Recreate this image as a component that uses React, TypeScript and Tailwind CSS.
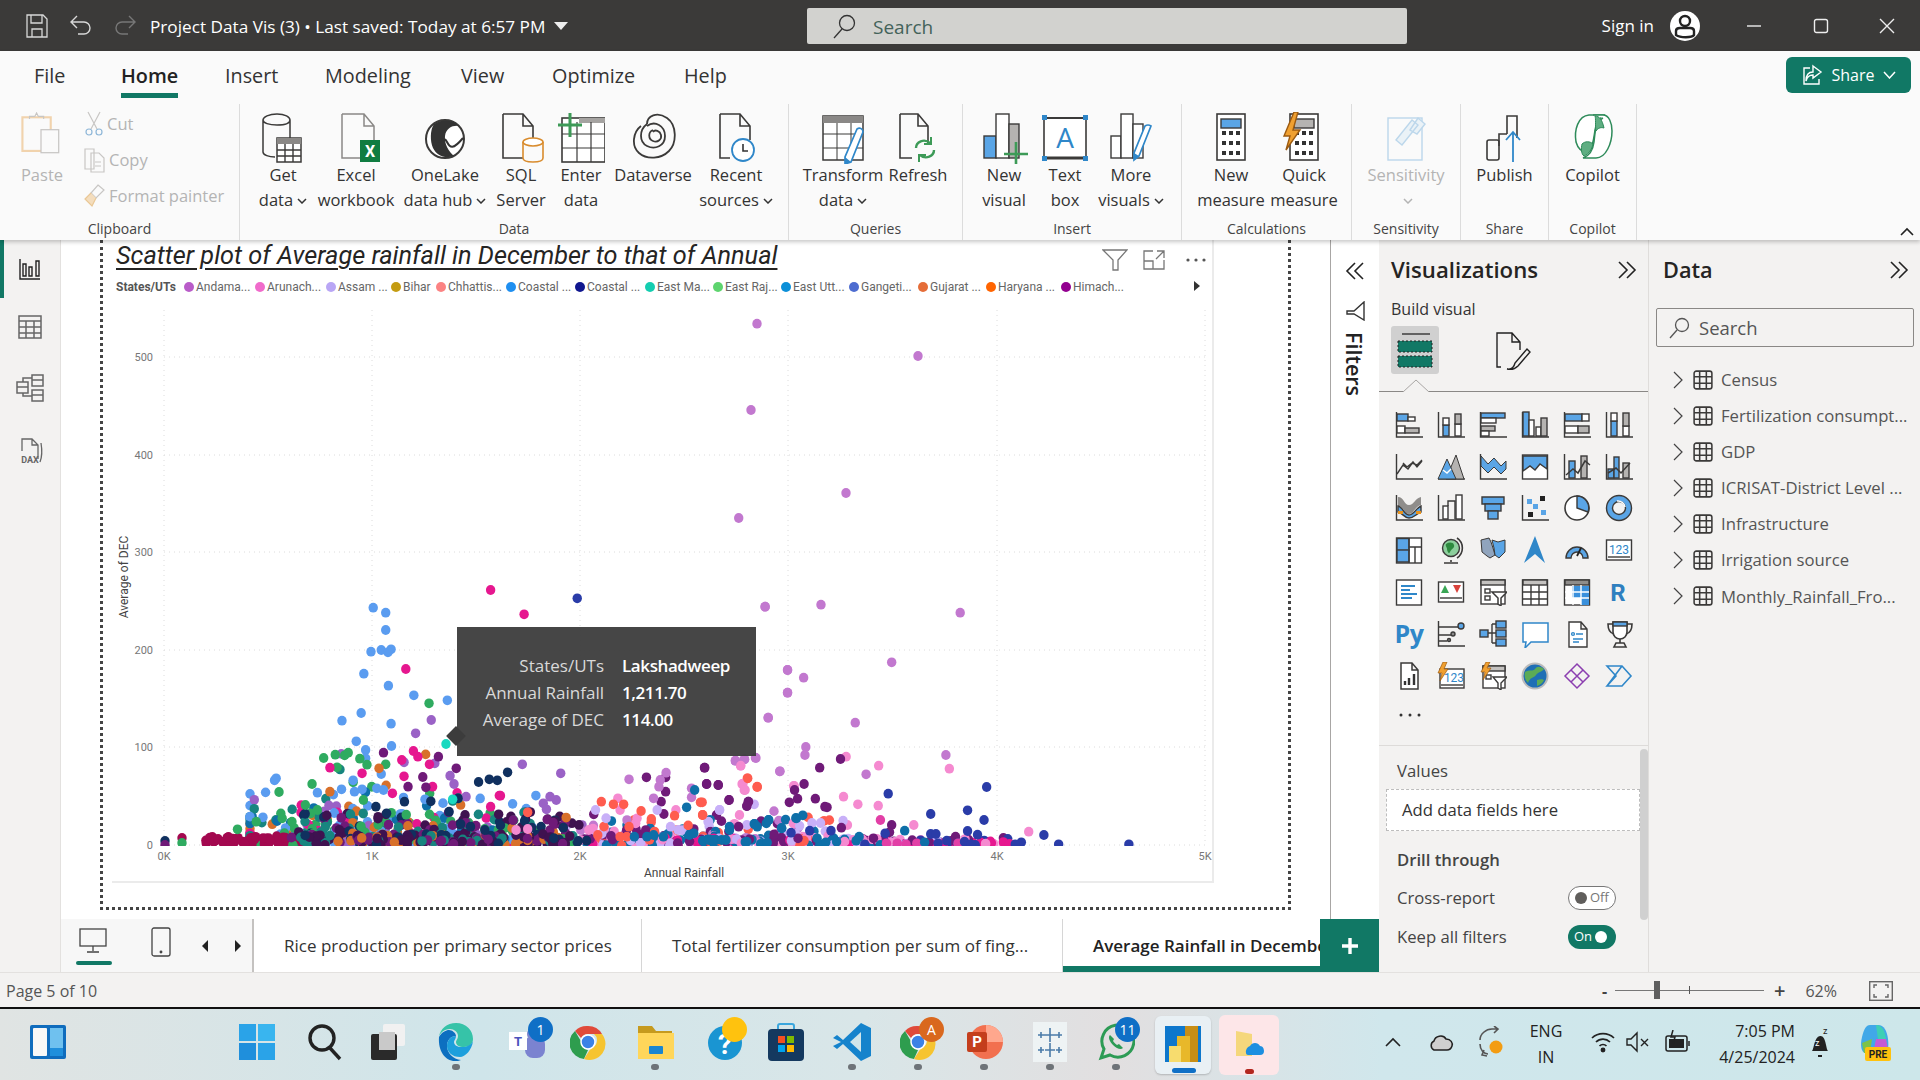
import type { ReactNode } from "react";

const UI = "font-['Open_Sans',sans-serif]";
const DIN = "font-['Roboto',sans-serif]";
const O = "#3b3a39";
const B = "#5aa5e6";
const G = "#b5b3b1";

// seeded random so the scatter stays the same on every render
function rng(seed: number) {
  return () => {
    seed |= 0;
    seed = (seed + 0x6d2b79f5) | 0;
    let t = Math.imul(seed ^ (seed >>> 15), 1 | seed);
    t = (t + Math.imul(t ^ (t >>> 7), 61 | t)) ^ t;
    return ((t ^ (t >>> 14)) >>> 0) / 4294967296;
  };
}

type Dot = [number, number, string];
const c = {
  sky: "#5a9cf0", hot: "#e6178f", green: "#2fab60", violet: "#9a62c6", plum: "#6f1a78", navy: "#10305f",
  teal: "#17857f", orange: "#d8702a", maroon: "#a3084f", fade: "#c278cf", pink: "#f58ad0", red: "#ff5c4f",
  lilac: "#c8b0f8", bluet: "#0e6fa8", indigo: "#2a3ca8", dark: "#3f1250", gold: "#b8921a",
};

function z8(list: number[][], col: string): Dot[] {
  return list.map(([x, y]) => [100 + x / 2.24, 600 + y / 3, col]);
}
function z10(list: number[][], col: string): Dot[] {
  return list.map(([x, y]) => [700 + x / 2.306, 600 + y / 3, col]);
}

function buildDots(): Dot[] {
  const r = rng(42);
  const out: Dot[] = [];
  const pick = (a: string[]) => a[Math.floor(r() * a.length)];
  // upper scatter of the first cluster, light colours underneath
  for (let i = 0; i < 300; i++) {
    const x = 375 + (r() + r() + r() - 1.5) * 170;
    out.push([Math.max(250, x), 845 - -Math.log(r() + 0.001) * 17, pick([c.sky, c.sky, c.green, c.orange, c.hot, c.violet, c.bluet, c.teal])]);
  }
  for (let i = 0; i < 190; i++) {
    const x = 700 + (r() - 0.5) * 270;
    out.push([x, 845 - -Math.log(r() + 0.001) * 8, pick([c.lilac, c.pink, c.fade, c.red, c.plum, c.bluet])]);
  }
  for (let i = 0; i < 90; i++) {
    out.push([830 + r() * 180, 845 - r() * r() * 10, pick([c.pink, c.hot, c.lilac, c.indigo, c.plum])]);
  }
  // baseline band
  for (let i = 0; i < 60; i++) out.push([205 + r() * 120, 836 + r() * 9, c.maroon]);
  for (let i = 0; i < 170; i++) out.push([290 + r() * 290, 812 + r() * 33, pick([c.dark, c.dark, c.plum, c.orange, c.teal, c.green, c.navy])]);
  for (let i = 0; i < 170; i++) out.push([300 + r() * 280, 834 + r() * 11, pick([c.dark, c.dark, c.dark, c.teal, c.orange, c.navy, c.plum])]);
  for (let i = 0; i < 110; i++) out.push([585 + r() * 300, 838 + r() * 8, pick([c.hot, c.pink, c.plum, c.bluet, c.lilac, c.red])]);
  out.push([165, 841, c.navy], [165, 845, c.plum], [182, 838, c.maroon], [182, 843, c.green]);
  return out;
}

const FIXED: Dot[] = [
  ...z8([[612,23],[640,38],[640,90],[607,155],[630,150],[652,148],[645,157],[591,221],[646,257],[703,286],[778,301],[585,339],[542,362],[652,371],[574,424],[653,438],[595,450],[595,475],[391,541],[567,541],[630,522],[587,568],[541,568],[487,578],[570,575],[620,565],[635,570],[365,652]], c.sky),
  ...z8([[737,310],[501,474],[527,464],[548,466],[556,458],[582,476],[598,494],[640,493],[531,502],[475,552],[401,576],[590,600],[460,615],[487,630],[408,655],[430,665],[350,665],[308,688]], c.green),
  ...z8([[742,360],[707,400],[750,490],[946,493],[1032,520],[793,552],[820,590],[993,610],[1022,600],[1000,628],[1008,590]], c.violet),
  ...z8([[950,43],[685,207],[676,480],[702,453],[712,470],[738,493],[681,529],[587,520],[745,560],[897,587],[875,620],[515,503],[655,580],[875,-30]], c.hot),
  ...z8([[635,458],[758,470],[723,531],[690,560],[730,562],[1224,532],[1267,532],[1354,503],[1359,552],[1385,555],[1267,575],[1257,605],[1263,642],[1409,600],[1452,605],[1449,618],[1106,643],[1015,668],[798,505],[1145,708]], c.plum),
  ...z8([[913,517],[848,546],[872,538],[890,541],[802,595],[782,635],[741,604],[682,605],[618,620],[642,640],[951,663],[1038,683],[1090,722],[808,672],[830,680],[862,690],[897,676]], c.navy),
  ...z8([[1540,210],[1540,278],[1497,353],[1490,20],[1523,514],[1185,538],[1255,540],[1252,560],[1468,473],[1443,478],[1423,482],[1325,565],[1325,592],[1240,595],[1268,518]], c.fade),
  ...z8([[1435,497],[1440,552],[1445,570],[1555,558],[1160,595],[1290,630],[1203,655],[1200,670],[1095,690],[1165,630],[932,690],[958,687]], c.pink),
  ...z8([[1450,535],[1472,560],[1345,607],[1123,605],[1150,613],[1173,613],[1212,633],[1235,657],[1287,647],[1350,645],[958,637],[1185,680],[1115,705],[1165,710],[1180,710]], c.red),
  ...z8([[1388,630],[1110,630],[1248,630],[1362,665],[1278,680],[1295,690]], c.lilac),
  ...z8([[1332,570],[1314,622],[1498,660],[1560,655],[1466,672],[1527,685],[1410,680],[1320,705],[1330,700],[1240,705],[1225,710],[1262,710],[1197,710],[1365,720],[1350,722],[1380,720]], c.bluet),
  ...z8([[775,432],[790,598]], "#1ad9c0"),
  ...z8([[1069,-5]], c.indigo),
  ...z8([[625,505],[515,575]], c.orange),
  [757, 323.7, c.fade], [751, 410, c.fade], [738.7, 518, c.fade], [918, 356, c.fade], [846, 493, c.fade],
  ...z10([[150,20],[279,14],[600,38],[442,187],[202,210],[239,233],[202,278],[157,353],[358,368],[244,441],[242,465],[567,465],[129,474],[103,478],[82,482],[184,514],[383,523]], c.fade),
  ...z10([[337,470],[412,497],[575,506],[94,497],[97,552],[102,570],[216,558],[331,590],[364,613],[411,617],[91,645],[493,675],[758,695],[340,675]], c.pink),
  ...z10([[416,660],[430,730],[455,730],[500,730],[595,730],[475,733]], "#e23fa6"),
  ...z10([[125,613],[45,630],[278,669],[258,669],[20,666],[108,675],[330,662]], c.lilac),
  ...z10([[110,535],[132,561],[5,607],[6,645],[240,722]], c.red),
  ...z10([[11,503],[324,477],[276,503],[15,552],[42,555],[240,552],[218,570],[225,596],[206,607],[266,596],[288,620],[293,622],[67,600],[112,605],[108,618],[442,675],[437,697],[326,683],[89,680],[400,715],[171,703],[226,715]], c.plum),
  ...z10([[237,646],[221,654],[158,660],[125,672],[132,680],[188,684],[472,692],[367,710],[360,722],[270,715],[518,727],[108,725],[68,690],[50,720],[20,718],[30,720],[60,720],[155,728],[290,727],[315,725]], c.bluet),
  ...z10([[661,561],[434,581],[532,642],[617,631],[655,660],[302,692],[253,692],[210,698],[617,693],[640,704],[793,705],[532,702],[544,702],[427,700],[827,733],[989,733],[741,727],[727,733],[569,722],[610,725],[625,733],[549,730],[380,733]], c.indigo),
];

const DOTS = [...buildDots(), ...FIXED];
const XT = [164, 372, 580, 788, 997, 1205];
const YT: [number, string][] = [[845, "0"], [747, "100"], [650, "200"], [552, "300"], [455, "400"], [357, "500"]];

function Scatter() {
  return (
    <svg viewBox="112 300 1102 583" className="block w-[1102px] h-[583px]">
      <defs>
        <clipPath id="plot"><rect x="112" y="300" width="1102" height="546" /></clipPath>
      </defs>
      {XT.map((x) => <line key={x} x1={x} x2={x} y1="310" y2="845" stroke="#dcdcdc" strokeDasharray="1 4" />)}
      {YT.map(([y, t]) => (
        <g key={t}>
          <line x1="164" x2="1205" y1={y} y2={y} stroke="#dcdcdc" strokeDasharray="1 4" />
          <text x="153" y={y + 4} textAnchor="end" fontSize="11" fill="#777" fontFamily="Roboto">{t}</text>
        </g>
      ))}
      {XT.map((x, i) => <text key={x} x={x} y="860" textAnchor="middle" fontSize="11" fill="#777" fontFamily="Roboto">{i}K</text>)}
      <g clipPath="url(#plot)">
        {DOTS.map((d, i) => <ellipse key={i} cx={d[0]} cy={d[1]} rx="4.7" ry="4.9" fill={d[2]} />)}
      </g>
      <text x="684" y="877" textAnchor="middle" fontSize="12" fill="#444" fontFamily="Roboto">Annual Rainfall</text>
      <text transform="translate(128 577) rotate(-90)" textAnchor="middle" fontSize="12" fill="#444" fontFamily="Roboto">Average of DEC</text>
    </svg>
  );
}

const LEGEND: [string, string, string][] = [
  ["Andama...", "#b95cc9", "w-[71px]"], ["Arunach...", "#f06bcb", "w-[71px]"], ["Assam ...", "#b9a6f5", "w-[65px]"], ["Bihar", "#c49c12", "w-[45px]"],
  ["Chhattis...", "#fb8383", "w-[70px]"], ["Coastal ...", "#1f8ff0", "w-[69px]"], ["Coastal ...", "#11178f", "w-[70px]"], ["East Ma...", "#14cdb0", "w-[68px]"],
  ["East Raj...", "#5ed46e", "w-[68px]"], ["East Utt...", "#0c8fd8", "w-[68px]"], ["Gangeti...", "#4d6cd0", "w-[69px]"], ["Gujarat ...", "#e56d38", "w-[68px]"],
  ["Haryana ...", "#ff6400", "w-[75px]"], ["Himach...", "#930090", "w-[70px]"],
];

function Ic({ w = 28, h = 28, vb, children, className }: { w?: number; h?: number; vb?: string; children: ReactNode; className?: string }) {
  return (
    <svg width={w} height={h} viewBox={vb ?? `0 0 ${w} ${h}`} fill="none" stroke={O} strokeWidth="1.4" className={`shrink-0 ${className ?? ""}`}>
      {children}
    </svg>
  );
}

const Ax = () => <path d="M1.5 1v25h27" stroke={O} strokeWidth="1.4" />;

function TableGlyph({ s = O, size = 20 }: { s?: string; size?: number }) {
  return (
    <svg width={size} height={size} viewBox="0 0 18 18" fill="none" stroke={s} strokeWidth="1.4" className="shrink-0">
      <rect x="1" y="1" width="16" height="16" rx="2" />
      <path d="M1 6h16M1 12h16M6 1v16M12 1v16" />
    </svg>
  );
}

const Pt = ({ d, f = B }: { d: string; f?: string }) => <path d={d} fill={f} stroke={O} strokeWidth="1" />;

const VIZ: ReactNode[] = [
  <><Ax /><rect x="2" y="3" width="11" height="7" fill={B} stroke={O} /><rect x="13" y="6" width="7" height="4" fill="#fff" stroke={O} /><rect x="2" y="15" width="8" height="7" fill="#fff" stroke={O} /><rect x="10" y="17" width="14" height="5" fill={G} stroke={O} /></>,
  <><Ax /><rect x="6" y="14" width="6" height="11" fill={B} stroke={O} /><rect x="6" y="7" width="6" height="7" fill="#fff" stroke={O} /><rect x="18" y="13" width="6" height="12" fill="#fff" stroke={O} /><rect x="18" y="3" width="6" height="10" fill={G} stroke={O} /></>,
  <><Ax /><rect x="2" y="2" width="24" height="5" fill={B} stroke={O} /><rect x="2" y="7" width="15" height="5" fill="#fff" stroke={O} /><rect x="2" y="15" width="14" height="5" fill={G} stroke={O} /><rect x="2" y="20" width="8" height="5" fill="#fff" stroke={O} /></>,
  <><Ax /><rect x="2" y="1" width="6" height="24" fill={B} stroke={O} /><rect x="8" y="9" width="5" height="16" fill="#fff" stroke={O} /><rect x="15" y="16" width="5" height="9" fill="#fff" stroke={O} /><rect x="20" y="7" width="6" height="18" fill={G} stroke={O} /></>,
  <><Ax /><rect x="2" y="3" width="17" height="7" fill={B} stroke={O} /><rect x="19" y="3" width="7" height="7" fill="#fff" stroke={O} /><rect x="2" y="15" width="13" height="7" fill="#fff" stroke={O} /><rect x="15" y="15" width="11" height="7" fill={G} stroke={O} /></>,
  <><Ax /><rect x="6" y="10" width="6" height="15" fill={B} stroke={O} /><rect x="6" y="2" width="6" height="8" fill="#fff" stroke={O} /><rect x="18" y="15" width="6" height="10" fill="#fff" stroke={O} /><rect x="18" y="2" width="6" height="13" fill={G} stroke={O} /></>,

  <><Ax /><path d="M2 21 8 12l5 4 5-7 4 5 5-6M8 10l4 4 5-4 5 2 5-5" /></>,
  <><path d="M1 26h27" /><Pt d="M9 26 19 2l8 24z" f={G} /><Pt d="M1 26 10 6l9 20z" /><path d="M6 17l4 3 4-4" stroke="#fff" strokeWidth="1.4" /></>,
  <><Ax /><Pt d="M2 3l7 8 6-6 7 8 5-5v8L22 21l-7-7-6 6-7-7z" /></>,
  <><rect x="1.5" y="2" width="25" height="24" fill="#fff" stroke={O} /><path d="M2 3h24v13l-7-5-5 6-5-4-7 5z" fill={B} /></>,
  <><Ax /><rect x="6" y="8" width="6" height="17" fill={B} stroke={O} /><rect x="18" y="3" width="6" height="22" fill={G} stroke={O} /><path d="M3 22l7-6 5 4 7-12 5 4" strokeWidth="1.5" /></>,
  <><Ax /><rect x="3" y="16" width="6" height="9" fill={B} stroke={O} /><rect x="9" y="4" width="5" height="21" fill={B} stroke={O} /><rect x="18" y="10" width="6" height="15" fill={G} stroke={O} /><path d="M3 20l8-5 5 5 9-10" strokeWidth="1.5" /></>,

  <><Ax /><path d="M3 3c6 0 6 8 11 8s6-7 12-8v8c-6 1-7 9-12 9S9 12 3 12z" fill="#8f8d8b" stroke="none" /><path d="M3 12c5 1 6 9 11 9s7-7 12-9v6c-5 2-7 6-12 6S8 19 3 18z" fill={B} stroke={O} /><rect x="3" y="17" width="5" height="3" fill="#e8931e" stroke="none" /><rect x="21" y="17" width="5" height="3" fill="#e8931e" stroke="none" /></>,
  <><Ax /><rect x="6" y="12" width="5" height="13" fill="#fff" stroke={O} /><path d="M11 12V7h7v18" /><rect x="19" y="1" width="6" height="24" fill="#fff" stroke={O} /></>,
  <><path d="M3 3h22v7H3z" fill={B} stroke={O} /><rect x="6" y="10" width="16" height="7" fill={B} stroke={O} /><rect x="9" y="17" width="10" height="8" fill={B} stroke={O} /></>,
  <><Ax /><rect x="19" y="2" width="5" height="5" fill="#222" stroke="none" /><rect x="6" y="5" width="5" height="5" fill={B} stroke="none" /><rect x="12" y="10" width="5" height="5" fill={B} stroke="none" /><rect x="7" y="18" width="5" height="5" fill="#222" stroke="none" /><rect x="20" y="16" width="5" height="5" fill={B} stroke="none" /></>,
  <><circle cx="14" cy="14" r="12" fill="#fff" strokeWidth="1.6" /><path d="M14 14V2a12 12 0 0 1 11 16z" fill={B} /></>,
  <><circle cx="14" cy="14" r="9.500" fill="none" stroke={B} strokeWidth="5.500" /><circle cx="14" cy="14" r="12.500" /><circle cx="14" cy="14" r="6.500" /><path d="M12 7a7 7 0 0 1 8 6" stroke="#fff" strokeWidth="1.500" /></>,

  <><rect x="1.5" y="2" width="25" height="25" fill="#fff" stroke={O} /><rect x="2" y="2.5" width="12" height="12" fill={B} /><rect x="2" y="14" width="12" height="12" fill={B} stroke={O} /><path d="M14 2v25M14 11h12M20 11v16" /></>,
  <><circle cx="14" cy="12" r="8.5" fill="#8ccf9c" /><path d="M9 8c3-2 7-2 8 1s-3 4-4 7-3-1-3-3-2-3-1-5z" fill="#2d8a3e" stroke="none" /><path d="M20 2a12 12 0 0 1 0 20M14 24v2M7 27h14" strokeWidth="1.6" /></>,
  <><Pt d="M2 4l8-2 2 4 2 6 2 7-5 3-3-2-5-4z" f="#90a4bd" /><Pt d="M13 4l6 2 7-2v12l-6 6-4-3-1-7z" f={B} /></>,
  <path d="M14 0 3 27l11-9 10 9z" fill="#2f87c9" stroke="none" />,
  <><path d="M3 22a11 11 0 0 1 22 0h-5a6 6 0 0 0-12 0z" fill={B} /><path d="M14 20l4-8" stroke="#222" strokeWidth="1.8" /></>,
  <><rect x="1.5" y="4" width="25" height="20" fill="#fff" /><path d="M3 21h22" /><text x="14" y="18" textAnchor="middle" fontSize="12" stroke="none" fill="#2f87c9" fontFamily="Roboto">123</text></>,

  <><rect x="1.5" y="2" width="25" height="25" fill="#fff" /><path d="M6 8h14M6 12h9M6 16h16M6 20h11" stroke="#2f87c9" strokeWidth="2" /></>,
  <><rect x="1.5" y="4" width="25" height="20" fill="#fff" /><path d="M8 7l4 8H4z" fill="#3aa655" stroke="none" /><path d="M16 7h8l-4 8z" fill="#d9423b" stroke="none" /><path d="M3 20h22" /></>,
  <><rect x="2" y="2" width="24" height="24" fill="#fff" /><rect x="2" y="2" width="24" height="5" fill="#c4c2c0" /><rect x="6" y="11" width="5" height="4" /><rect x="6" y="18" width="5" height="4" /><path d="M13 14h15l-6 6v8l-3-2v-6z" fill="#fff" strokeWidth="1.5" /></>,
  <><rect x="1.5" y="2" width="25" height="25" fill="#fff" /><rect x="2" y="2" width="24" height="5" fill="#c4c2c0" /><path d="M2 14h24M2 21h24M10 7v20M18 7v20" /></>,
  <><rect x="1.5" y="2" width="25" height="25" fill="#fff" /><rect x="2" y="2" width="24" height="5" fill="#8f8d8b" /><rect x="9" y="8" width="17" height="12" fill="#3a90dc" stroke="none" /><rect x="18" y="20" width="8" height="7" fill="#3a90dc" stroke="none" /><path d="M2 14h24M2 20h24M10 7v20M18 7v20" stroke="#fff" /></>,
  <text x="13" y="23" textAnchor="middle" fontSize="24" fontWeight="700" stroke="none" fill="#2f7fbf" fontFamily="Roboto">R</text>,

  null,
  <><Ax /><path d="M2 7h20M2 15h12M2 21h8" /><circle cx="24" cy="6" r="3" fill={B} /><circle cx="16" cy="14" r="2" fill="#888" /><circle cx="12" cy="20" r="1.5" fill="#888" /></>,
  <><rect x="1" y="10" width="8" height="7" fill={B} /><rect x="17" y="1" width="10" height="7" fill={B} /><rect x="17" y="10" width="10" height="7" fill={B} /><rect x="17" y="19" width="10" height="7" fill={B} /><path d="M9 13h8M13 4h4M13 23h4M13 4v19" /></>,
  <path d="M2 3h25v19H10l-6 6 1-6H2z" fill="#fff" stroke="#2f87c9" strokeWidth="1.5" />,
  <><path d="M6 2h12l6 7v18H6zM18 2v7h6" fill="#fff" stroke={O} /><circle cx="10" cy="14" r="1.4" stroke="#2f87c9" /><path d="M13 14h7M10 19h10M10 22h6" stroke="#2f87c9" /></>,
  <><path d="M8 2h14v10a7 7 0 0 1-14 0z" fill="#fff" strokeWidth="1.6" /><rect x="8" y="2" width="14" height="4" fill={B} /><path d="M8 4H3c0 6 2 9 6 10M22 4h5c0 6-2 9-6 10M15 19v4M9 27h12l-2-4h-8z" strokeWidth="1.6" /></>,

  <><path d="M6 1h11l6 7v19H6zM17 1v7h6" fill="#fff" strokeWidth="1.5" /><path d="M10 23v-4M14 23v-7M19 23V12" stroke="#333" strokeWidth="2.4" /></>,
  <><rect x="3" y="7" width="24" height="19" fill="#fff" /><path d="M4 23h22" /><text x="17" y="20" textAnchor="middle" fontSize="12" stroke="none" fill="#2f87c9" fontFamily="Roboto">123</text><path d="M6 0 1 11h4l-2 8 8-12H7l3-7z" fill="#f0a030" stroke="#9c5a10" strokeWidth=".7" /></>,
  <><rect x="4" y="4" width="22" height="22" fill="#fff" /><rect x="4" y="4" width="22" height="5" fill="#c4c2c0" /><rect x="7" y="13" width="5" height="4" /><path d="M14 15h14l-6 6v7l-3-2v-5z" fill="#fff" /><path d="M7 0 2 10h4l-2 8 8-12H8l3-6z" fill="#f0a030" stroke="#9c5a10" strokeWidth=".7" /></>,
  <><circle cx="14" cy="14" r="12.5" fill="#1f6fb5" stroke="#bbb" strokeWidth="2" /><path d="M4 10c4-3 8 0 10-3s5-3 9 0c-2 3-6 3-8 6s-6 2-8 8c-3-3-4-7-3-11zM16 18c3-1 6-1 7 0-1 3-4 5-7 6z" fill="#5cab56" stroke="none" /></>,
  <><path d="M14 2 26 14 14 26 2 14z" stroke="#8b3fb0" strokeWidth="1.5" /><path d="M8 8l12 12M20 8 8 20" stroke="#8b3fb0" strokeWidth="1.5" /></>,
  <path d="M2 4h15l9 10-9 10H2l9-10zM2 24l15-20" stroke="#2f87c9" strokeWidth="1.6" />,
];

const VizCell = ({ children }: { children: ReactNode }) => (
  <div className="flex items-center justify-center">
    {children ? <Ic>{children}</Ic> : <span className="text-[25px] font-bold leading-none text-[#2f87c9] tracking-[-0.5px]">Py</span>}
  </div>
);

function RibbonBtn({ width, lines, icon, arrow, muted }: { width: string; lines: string[]; icon: ReactNode; arrow?: boolean; muted?: boolean }) {
  return (
    <div className={`${width} flex flex-col items-center`}>
      <div className="h-[46px] flex items-start justify-center">{icon}</div>
      <div className={`mt-[4px] flex flex-col items-center text-[16.5px] leading-[25px] whitespace-nowrap ${muted ? "text-[#b4b4b4]" : "text-[#333]"}`}>
        {lines.map((l, i) => (
          <span key={i} className="flex items-center min-h-[25px]">
            {l}
            {arrow && i === lines.length - 1 && (
              <svg width="10" height="6" viewBox="0 0 10 6" className="ml-[4px] mt-[3px]" fill="none" stroke="currentColor" strokeWidth="1.5"><path d="M1 1l4 4 4-4" /></svg>
            )}
          </span>
        ))}
      </div>
    </div>
  );
}

function Group({ width, pl, label, children }: { width: string; pl?: string; label: string; children: ReactNode }) {
  return (
    <div className={`${width} h-full shrink-0 flex flex-col border-r border-[#dcdcdc]`}>
      <div className={`h-[110px] flex pt-[8px] ${pl ?? ""}`}>{children}</div>
      <div className="h-[26px] text-center text-[14px] text-[#444] leading-[30px]">{label}</div>
    </div>
  );
}

const I = { w: 48, h: 52 };
const IconGet = () => <Ic {...I}><path d="M4 8v32c0 3 6 5 12 5M4 8c0-3 6-6 14-6s13 3 13 6-5 5-13 5S4 11 4 8zM31 8v19" strokeWidth="1.5" /><rect x="18" y="26" width="24" height="24" fill="#fff" strokeWidth="1.5" /><rect x="18" y="26" width="24" height="6" fill="#8a8886" stroke="none" /><path d="M18 38h24M18 44h24M26 32v18M34 32v18" /></Ic>;
const IconExcel = () => <Ic {...I} vb="0 0 48 52"><path d="M10 2h22l10 12v14M10 2v44h18M32 2v12h10" stroke="#8a8886" strokeWidth="1.5" /><rect x="28" y="28" width="20" height="22" fill="#107c41" stroke="none" /><text x="38" y="45" textAnchor="middle" fontSize="16" fontWeight="700" fill="#fff" stroke="none" fontFamily="Roboto">X</text></Ic>;
const IconLake = () => <Ic {...I}><circle cx="24" cy="27" r="19" fill="#fff" strokeWidth="2" /><path d="M13 12c8-6 20-4 25 2-6-1-13 2-14 10s4 16 9 20c-9 3-17 0-21-8-3-7-3-18 1-24z" fill="#333" stroke="none" /><path d="M14 38c4-10 9-14 12-8s6 8 16-4" stroke="#333" strokeWidth="2" /></Ic>;
const IconSql = () => <Ic {...I}><path d="M6 2h20l10 12v12M6 2v44h20M26 2v12h10" strokeWidth="1.6" /><ellipse cx="36" cy="30" rx="10" ry="4" stroke="#d98c2e" strokeWidth="1.6" fill="#fff" /><path d="M26 30v16c0 3 4 4 10 4s10-1 10-4V30" stroke="#d98c2e" strokeWidth="1.6" /></Ic>;
const IconEnter = () => <Ic {...I}><rect x="5" y="6" width="43" height="44" fill="#fff" stroke={O} strokeWidth="1.6" /><rect x="22" y="6" width="26" height="5" fill="#a5a3a1" stroke="none" /><path d="M5 22h43M5 36h43M20 10v40M34 10v40" strokeWidth="1.2" /><path d="M1 13h24M13 1v24" stroke="#3d9a57" strokeWidth="3" /></Ic>;
const IconVerse = () => <Ic {...I}><path d="M12 14C4 20 2 34 10 41s22 6 30-2 8-26-2-33-20-2-20 6" strokeWidth="1.800" /><path d="M18 12c-8 6-8 18 0 22s18 0 18-10-10-16-18-10M24 18c-5 2-5 9 0 11s9-2 8-6-6-6-8-3" strokeWidth="1.800" /></Ic>;
const IconRecent = () => <Ic {...I}><path d="M8 2h20l10 12v14M8 2v44h10M28 2v12h10" strokeWidth="1.6" /><circle cx="31" cy="38" r="11" fill="#fff" stroke="#2f87c9" strokeWidth="1.8" /><path d="M31 32v7h5" stroke="#333" strokeWidth="1.6" /></Ic>;
const IconTransform = () => <Ic {...I}><rect x="4" y="4" width="40" height="44" fill="#fff" strokeWidth="1.5" /><rect x="4" y="4" width="40" height="7" fill="#8a8886" stroke="none" /><path d="M4 22h40M4 36h40M18 11v37M32 11v37" strokeWidth="1" /><path d="M44 20 32 50l-6 2v-7l12-28c3-2 6 0 6 3z" fill="#fff" stroke="#2f87c9" strokeWidth="1.7" /><path d="M26 52v-7l6 5z" fill="#2f87c9" stroke="none" /></Ic>;
const IconRefresh = () => <Ic {...I}><path d="M6 2h18l10 12v18M6 2v44h12M24 2v12h10" strokeWidth="1.6" /><path d="M22 36c0-6 8-10 14-5M40 38c0 6-8 10-14 5" stroke="#3d9a57" strokeWidth="2.4" /><path d="M37 25v7h-7M25 50v-7h7" stroke="#3d9a57" strokeWidth="2" /></Ic>;
const IconNew = () => <Ic {...I}><rect x="4" y="24" width="12" height="22" fill={B} stroke={O} /><rect x="16" y="2" width="13" height="44" fill="#fff" stroke={O} /><rect x="29" y="12" width="10" height="34" fill="#b5b3b1" stroke={O} /><path d="M36 30v22M24 42h24" stroke="#3d9a57" strokeWidth="2.6" /></Ic>;
const IconText = () => <Ic {...I}><rect x="3" y="6" width="42" height="40" fill="#fff" strokeWidth="1.6" /><path d="M3 46h42" strokeWidth="3" /><path d="M3 6h42" strokeWidth="2" /><rect x="1" y="3" width="5" height="5" fill="#2f87c9" stroke="none" /><rect x="42" y="3" width="5" height="5" fill="#2f87c9" stroke="none" /><rect x="1" y="44" width="5" height="5" fill="#2f87c9" stroke="none" /><rect x="42" y="44" width="5" height="5" fill="#2f87c9" stroke="none" /><text x="24" y="36" textAnchor="middle" fontSize="28" fill="#2f87c9" stroke="none" fontFamily="Open Sans">A</text></Ic>;
const IconMore = () => <Ic {...I}><rect x="4" y="24" width="10" height="22" fill="#fff" /><rect x="14" y="2" width="12" height="44" fill="#fff" /><rect x="26" y="12" width="10" height="34" fill="#fff" /><path d="M44 14 32 44l-5 4v-7l11-27c3-2 6 0 6 0z" fill="#fff" stroke="#2f87c9" strokeWidth="1.7" /><path d="M27 48v-7l5 3z" fill="#2f87c9" stroke="none" /></Ic>;
const Calc = () => <><rect x="10" y="2" width="28" height="46" fill="#fff" strokeWidth="1.6" /><path d="M15 21h4m3 0h4m3 0h4M15 31h4m3 0h4m3 0h4M15 41h4m3 0h4m3 0h4" stroke="#333" strokeWidth="4" /></>;
const IconMeasure = () => <Ic {...I}><Calc /><rect x="14" y="7" width="20" height="9" fill={B} stroke={O} /></Ic>;
const IconQuick = () => <Ic {...I}><Calc /><rect x="14" y="7" width="20" height="9" fill="#b5b3b1" stroke={O} /><path d="M14 0 4 24h6l-4 14 14-20h-7l5-18z" fill="#f0a030" stroke="#9c5a10" /></Ic>;
const IconSens = () => <Ic {...I} className="opacity-50"><rect x="6" y="6" width="34" height="42" stroke="#7fb5de" strokeWidth="1.4" /><path d="M14 28 30 8l6 5-16 20zM28 18l8-12 7 6-8 10z" stroke="#7fb5de" fill="#dcebf6" strokeWidth="1.4" /></Ic>;
const IconPublish = () => <Ic {...I}><rect x="6" y="28" width="12" height="20" rx="2" strokeWidth="1.6" /><path d="M18 34v-12h8M26 22V4h10v22" strokeWidth="1.6" /><path d="M32 50V20M25 28l7-8 7 8" stroke="#2f87c9" strokeWidth="1.8" /></Ic>;
const IconCopilot = () => <Ic {...I}><path d="M7 30C5 18 9 4 20 3h16c-6 2-9 8-10 15s-2 20-8 22c-5 0-9-3-11-10z" fill="#fff" stroke="#2e8b5a" strokeWidth="1.500" /><path d="M24 3h10c6 0 9 8 9 16 0 12-6 27-16 27H14c6-2 10-8 11-16s1-20 9-24" fill="#fff" stroke="#2e8b5a" strokeWidth="1.500" /><path d="M26 4c4 0 7 3 9 12-3-1-6 0-8 3-1-6 0-12-1-15zM13 32c3-3 8-3 11 0-1 5-4 10-9 12-3-2-3-8-2-12z" fill="#5fae82" stroke="#2e8b5a" strokeWidth="1" /></Ic>;

const Dim = "#c8c6c4";

function Ribbon() {
  return (
    <div className={`h-[189px] shrink-0 bg-[#fafafa] shadow-[0_2px_4px_rgba(0,0,0,0.22)] relative z-20 ${UI}`}>
      <div className="h-[53px] flex pl-[34px] text-[19.8px] text-[#333] relative">
        {[["File", "w-[87px]"], ["Home", "w-[104px]"], ["Insert", "w-[100px]"], ["Modeling", "w-[136px]"], ["View", "w-[91px]"], ["Optimize", "w-[132px]"], ["Help", "w-[60px]"]].map(([t, w]) => (
          <div key={t} className={`${w} pt-[10px]`}>
            <span className={`relative inline-block pb-[2px] ${t === "Home" ? "font-semibold border-b-[5px] border-[#117865] text-[#222]" : ""}`}>{t}</span>
          </div>
        ))}
        <div className="absolute right-[9px] top-[6px] w-[125px] h-[36px] rounded-md bg-[#117865] flex items-center justify-center gap-[8px] text-[#fff] text-[16px]">
          <svg width="22" height="22" viewBox="0 0 22 22" fill="none" stroke="#fff" strokeWidth="1.4"><path d="M11 2l8 6-8 6v-3c-3 0-6 2-7 6 0-6 3-9 7-9zM8 4H2v16h15v-5" /></svg>
          Share
          <svg width="13" height="8" viewBox="0 0 13 8" fill="none" stroke="#fff" strokeWidth="1.5"><path d="M1 1l5.5 6L12 1" /></svg>
        </div>
      </div>

      <div className="h-[136px] flex relative">
        {/* Clipboard */}
        <Group width="w-[240px]" label="Clipboard">
          <div className="w-[84px] flex flex-col items-center text-[16.5px] text-[#b4b4b4]">
            <Ic {...I} className="ml-[-2px] h-[46px]"><rect x="3" y="6" width="32" height="38" stroke="#f1d3ad" strokeWidth="2.4" /><path d="M11 8V5h6l2-4 2 4h6v3" stroke={Dim} strokeWidth="1.3" /><rect x="24" y="20" width="20" height="26" fill="#fafafa" stroke={Dim} strokeWidth="1.4" /></Ic>
            <span className="mt-[4px] leading-[25px]">Paste</span>
          </div>
          <div className="flex flex-col text-[16.5px] text-[#b4b4b4] leading-[36px] mt-[-6px]">
            <div className="flex items-center gap-[3px]"><svg width="20" height="26" viewBox="0 0 20 26" fill="none" stroke={Dim} strokeWidth="1.2"><path d="M4 1l9 17M16 1L7 18" /><circle cx="5" cy="21" r="3" stroke="#8fb7d8" /><circle cx="15" cy="21" r="3" stroke="#8fb7d8" /></svg>Cut</div>
            <div className="flex items-center gap-[3px]"><svg width="22" height="26" viewBox="0 0 22 26" fill="none" stroke={Dim} strokeWidth="1.2"><path d="M1 2h9v20H1zM7 6h8l5 5v14H7zM11 15h6M11 19h6" /></svg>Copy</div>
            <div className="flex items-center gap-[3px]"><svg width="22" height="26" viewBox="0 0 22 26" fill="none" stroke={Dim} strokeWidth="1.2"><path d="M14 2l6 5-8 8-5-5z" /><path d="M7 10l-6 6 7 7 4-8" fill="#f4ddbd" stroke="#e9c795" /></svg><span className="whitespace-nowrap">Format painter</span></div>
          </div>
        </Group>

        <Group width="w-[549px]" label="Data" pl="pl-[6px]">
          <RibbonBtn width="w-[74px]" lines={["Get", "data"]} arrow icon={<IconGet />} />
          <RibbonBtn width="w-[72px]" lines={["Excel", "workbook"]} icon={<IconExcel />} />
          <RibbonBtn width="w-[106px]" lines={["OneLake", "data hub"]} arrow icon={<IconLake />} />
          <RibbonBtn width="w-[46px]" lines={["SQL", "Server"]} icon={<IconSql />} />
          <RibbonBtn width="w-[74px]" lines={["Enter", "data"]} icon={<IconEnter />} />
          <RibbonBtn width="w-[70px]" lines={["Dataverse"]} icon={<IconVerse />} />
          <RibbonBtn width="w-[96px]" lines={["Recent", "sources"]} arrow icon={<IconRecent />} />
        </Group>

        <Group width="w-[174px]" label="Queries" pl="pl-[6px]">
          <RibbonBtn width="w-[96px]" lines={["Transform", "data"]} arrow icon={<IconTransform />} />
          <RibbonBtn width="w-[54px]" lines={["Refresh"]} icon={<IconRefresh />} />
        </Group>

        <Group width="w-[219px]" label="Insert">
          <RibbonBtn width="w-[82px]" lines={["New", "visual"]} icon={<IconNew />} />
          <RibbonBtn width="w-[40px]" lines={["Text", "box"]} icon={<IconText />} />
          <RibbonBtn width="w-[92px]" lines={["More", "visuals"]} arrow icon={<IconMore />} />
        </Group>

        <Group width="w-[170px]" label="Calculations" pl="pl-[8px]">
          <RibbonBtn width="w-[82px]" lines={["New", "measure"]} icon={<IconMeasure />} />
          <RibbonBtn width="w-[64px]" lines={["Quick", "measure"]} icon={<IconQuick />} />
        </Group>

        <Group width="w-[109px]" label="Sensitivity">
          <RibbonBtn width="w-[109px]" lines={["Sensitivity", ""]} arrow muted icon={<IconSens />} />
        </Group>

        <Group width="w-[88px]" label="Share">
          <RibbonBtn width="w-[88px]" lines={["Publish"]} icon={<IconPublish />} />
        </Group>

        <Group width="w-[88px]" label="Copilot">
          <RibbonBtn width="w-[88px]" lines={["Copilot"]} icon={<IconCopilot />} />
        </Group>

        <svg width="14" height="9" viewBox="0 0 14 9" className="absolute right-[6px] bottom-[4px]" fill="none" stroke="#222" strokeWidth="1.6"><path d="M1 8l6-6 6 6" /></svg>
      </div>
    </div>
  );
}

function TitleBar() {
  return (
    <div className={`h-[51px] shrink-0 bg-[#3b3a39] flex items-center text-[#fff] relative ${UI}`}>
      <div className="w-[150px] flex items-center pl-[26px] gap-[22px]">
        <svg width="22" height="24" viewBox="0 0 22 24" fill="none" stroke="#d8d8d8" strokeWidth="1.3"><path d="M1 1h16l4 4v18H1zM5 1v8h11V1M6 23v-8h10v8" /></svg>
        <svg width="22" height="24" viewBox="0 0 22 24" fill="none" stroke="#d8d8d8" strokeWidth="1.4"><path d="M2 8h12a6 6 0 0 1 0 12H8M7 2 1 8l6 6" /></svg>
        <svg width="22" height="24" viewBox="0 0 22 24" fill="none" stroke="#777" strokeWidth="1.4"><path d="M20 8H8a6 6 0 0 0 0 12h6M15 2l6 6-6 6" /></svg>
      </div>
      <span className="text-[17.2px] whitespace-nowrap mt-[3px]">Project Data Vis (3) • Last saved: Today at 6:57 PM</span>
      <svg width="14" height="8" viewBox="0 0 14 8" className="ml-[9px]" fill="#eee"><path d="M0 0h14L7 8z" /></svg>
      <div className="absolute left-[807px] top-[8px] w-[600px] h-[36px] bg-[#d2d2cf] rounded-[2px] flex items-center pl-[25px] gap-[15px] text-[#44625a] text-[19px]">
        <svg width="26" height="26" viewBox="0 0 26 26" fill="none" stroke="#333" strokeWidth="1.3"><circle cx="15" cy="10" r="7.5" /><path d="M10 16 2 25" /></svg>
        <span className="mt-[2px]">Search</span>
      </div>
      <div className="ml-auto flex items-center">
        <span className="text-[17px] mr-[16px]">Sign in</span>
        <svg width="30" height="30" viewBox="0 0 30 30" className="mr-[46px]"><circle cx="15" cy="15" r="15" fill="#fff" /><circle cx="15" cy="10" r="5" fill="none" stroke="#222" strokeWidth="2.4" /><path d="M6 24v-4c0-2 2-3 4-3h10c2 0 4 1 4 3v4c-2 3-14 3-18 0z" fill="none" stroke="#222" strokeWidth="2.4" /></svg>
        <svg width="16" height="16" viewBox="0 0 16 16" className="mr-[51px]" stroke="#eee" strokeWidth="1.4"><path d="M1 8h14" /></svg>
        <svg width="16" height="16" viewBox="0 0 16 16" className="mr-[50px]" fill="none" stroke="#eee" strokeWidth="1.4"><rect x="1.5" y="1.5" width="13" height="13" rx="2" /></svg>
        <svg width="16" height="16" viewBox="0 0 16 16" className="mr-[25px]" stroke="#eee" strokeWidth="1.4"><path d="M1 1l14 14M15 1 1 15" /></svg>
      </div>
    </div>
  );
}

function Sidebar() {
  return (
    <div className="w-[61px] shrink-0 bg-[#f3f2f1] border-r border-[#e3e1df] relative flex flex-col items-center pt-[18px] gap-[35px]">
      <div className="absolute left-0 top-0 w-[4px] h-[58px] bg-[#117865]" />
      <svg width="22" height="22" viewBox="0 0 22 22" fill="none" stroke="#222" strokeWidth="1.4"><path d="M1 1v20h20M4 18V6h3v12zM10 18V9h3v9zM17 18V3h3v15z" /></svg>
      <svg width="24" height="24" viewBox="0 0 24 24" fill="none" stroke="#666" strokeWidth="1.5"><rect x="1" y="1" width="22" height="22" /><path d="M1 6h22M1 12h22M1 18h22M8 6v17M16 6v17" /></svg>
      <svg width="28" height="28" viewBox="0 0 28 28" fill="none" stroke="#666" strokeWidth="1.5"><rect x="1" y="8" width="11" height="11" /><rect x="16" y="1" width="11" height="11" /><rect x="16" y="16" width="11" height="11" /><path d="M1 13h11M16 6h11M16 21h11M7 8V4h9M7 19v3h9" /></svg>
      <svg width="28" height="28" viewBox="0 0 28 28" fill="none" stroke="#666" strokeWidth="1.3"><path d="M6 14V2h10l6 6v14M16 2v6h6M25 6c1 6 1 14-1 19" /><text x="14" y="26" textAnchor="middle" fontSize="9" fontWeight="700" fill="#666" stroke="none" fontFamily="Roboto">DAX</text></svg>
    </div>
  );
}

function Canvas() {
  return (
    <div className="flex-1 bg-[#fff] pl-[39px] pr-[39px] overflow-hidden">
      <div className="h-[670px] border-x-[3px] border-b-[3px] border-dotted border-[#444] pl-[9px] pr-[75px]">
        <div className="relative h-[643px] w-[1102px] border-r-2 border-b-2 border-[#ebebeb]">
          {/* title */}
          <div className="h-[32px] flex items-center pl-[4px] relative">
            <span className={`text-[25.3px] italic text-[#252423] underline underline-offset-[4px] whitespace-nowrap ${DIN}`}>Scatter plot of Average rainfall in December to that of Annual</span>
            <div className="absolute left-[990px] top-[9px] flex items-center">
              <svg width="26" height="22" viewBox="0 0 26 22" fill="none" stroke="#777" strokeWidth="1.3"><path d="M1 1h24l-9 10v10h-5V11z" /></svg>
              <svg width="22" height="20" viewBox="0 0 22 20" className="ml-[15px]" fill="none" stroke="#777" strokeWidth="1.3"><path d="M10 1H1v18h20v-9M1 11h9v8M14 1h7v7M21 1l-8 8" /></svg>
              <svg width="22" height="6" viewBox="0 0 22 6" className="ml-[20px]" fill="#555"><circle cx="3" cy="3" r="1.6" /><circle cx="11" cy="3" r="1.6" /><circle cx="19" cy="3" r="1.6" /></svg>
            </div>
          </div>
          {/* legend */}
          <div className={`h-[28px] pt-[2px] flex items-center pl-[4px] text-[12px] text-[#666] relative ${DIN}`}>
            <span className="w-[68px] font-bold text-[#555] whitespace-nowrap">States/UTs</span>
            {LEGEND.map(([t, col, w], i) => (
              <div key={i} className={`${w} flex items-center gap-[2px] whitespace-nowrap`}>
                <span className="w-[10px] h-[10px] rounded-full shrink-0" style={{ backgroundColor: col }} />
                {t}
              </div>
            ))}
            <svg width="6" height="10" viewBox="0 0 6 10" className="absolute left-[1082px] top-[9px]" fill="#333"><path d="M0 0l6 5-6 5z" /></svg>
          </div>
          <Scatter />
          {/* tooltip over the chart */}
          <div className={`absolute left-[345px] top-[387px] w-[299px] h-[129px] bg-[#3c3c3c]/95 text-[17px] text-[#d9d9d9] ${UI}`}>
            <div className="absolute left-[-8px] top-[102px] w-[14px] h-[14px] rotate-45 bg-[#3c3c3c]" />
            <div className="grid grid-cols-[147px_1fr] gap-x-[18px] pt-[25px] leading-[27px]">
              <span className="text-right">States/UTs</span><span className="font-semibold text-[#fff] tracking-[-0.4px]">Lakshadweep</span>
              <span className="text-right">Annual Rainfall</span><span className="font-semibold text-[#fff] tracking-[-0.4px]">1,211.70</span>
              <span className="text-right whitespace-nowrap">Average of DEC</span><span className="font-semibold text-[#fff] tracking-[-0.4px]">114.00</span>
            </div>
          </div>
        </div>
      </div>
    </div>
  );
}

function Filters() {
  return (
    <div className={`w-[49px] shrink-0 bg-[#fff] border-l border-[#a8a6a4] flex flex-col items-center pt-[21px] ${UI}`}>
      <svg width="20" height="20" viewBox="0 0 20 20" fill="none" stroke="#222" strokeWidth="1.6"><path d="M10 2 2 10l8 8M18 2l-8 8 8 8" /></svg>
      <svg width="20" height="20" viewBox="0 0 20 20" className="mt-[20px]" fill="none" stroke="#333" strokeWidth="1.4"><path d="M19 1v18L9 13H2v-3h7z" /></svg>
      <span className="mt-[11px] ml-[-3px] text-[21.5px] font-semibold text-[#222] [writing-mode:vertical-rl]">Filters</span>
    </div>
  );
}

function Tabs() {
  return (
    <div className={`h-[53px] shrink-0 flex bg-[#fff] text-[17px] text-[#333] ${UI}`}>
      <div className="w-[193px] shrink-0 bg-[#f7f7f7] border-r-2 border-[#c4c2c0] flex items-center relative pl-[18px]">
        <svg width="28" height="26" viewBox="0 0 28 26" className="mb-[10px]" fill="none" stroke="#444" strokeWidth="1.3"><rect x="1" y="1" width="26" height="17" /><path d="M14 18v5M8 24h12" /></svg>
        <svg width="20" height="30" viewBox="0 0 20 30" className="ml-[44px] mb-[8px]" fill="none" stroke="#444" strokeWidth="1.3"><rect x="1" y="1" width="18" height="28" rx="2" /><circle cx="10" cy="25" r=".8" fill="#444" /></svg>
        <svg width="6" height="12" viewBox="0 0 6 12" className="ml-[31px]" fill="#222"><path d="M6 0v12L0 6z" /></svg>
        <svg width="6" height="12" viewBox="0 0 6 12" className="ml-[27px]" fill="#222"><path d="M0 0v12l6-6z" /></svg>
        <div className="absolute left-[15px] bottom-[7px] w-[36px] h-[4px] rounded-full bg-[#117865]" />
      </div>
      <div className="w-[388px] shrink-0 border-r border-[#d6d6d6] flex items-center pl-[30px] pt-[1px] whitespace-nowrap">Rice production per primary sector prices</div>
      <div className="w-[421px] shrink-0 border-r border-[#d6d6d6] flex items-center pl-[30px] pt-[1px] whitespace-nowrap">Total fertilizer consumption per sum of fing...</div>
      <div className="w-[257px] shrink-0 border-b-[6px] border-[#117865] flex items-center pl-[30px] pt-[6px] whitespace-nowrap overflow-hidden font-semibold text-[#222]">Average Rainfall in December</div>
      <div className="flex-1 bg-[#117865] flex items-center justify-center">
        <svg width="16" height="16" viewBox="0 0 16 16" stroke="#fff" strokeWidth="3.4"><path d="M8 0v16M0 8h16" /></svg>
      </div>
    </div>
  );
}

function VizPane() {
  return (
    <div className={`w-[270px] shrink-0 bg-[#f3f2f1] border-r border-[#dfdddb] flex flex-col relative ${UI}`}>
      <div className="h-[60px] flex items-center justify-between pl-[12px] pr-[11px]">
        <span className="text-[22.2px] font-semibold text-[#252423]">Visualizations</span>
        <svg width="20" height="20" viewBox="0 0 20 20" fill="none" stroke="#222" strokeWidth="1.6"><path d="M2 2l8 8-8 8M10 2l8 8-8 8" /></svg>
      </div>
      <div className="pl-[12px] text-[16px] leading-[18px] text-[#333]">Build visual</div>
      <div className="h-[66px] relative border-b border-[#8a8886] mt-[8px]">
        <div className="absolute left-[12px] top-0 w-[48px] h-[48px] rounded-[3px] bg-[#d0d0d0] flex items-center justify-center">
          <svg width="38" height="36" viewBox="0 0 38 36"><path d="M6 2h28" stroke="#333" strokeWidth="1.4" /><rect x="2" y="9" width="34" height="11" fill="#117865" stroke="#222" strokeDasharray="2 2" /><rect x="2" y="24" width="34" height="11" fill="#117865" stroke="#222" strokeDasharray="2 2" /></svg>
        </div>
        <svg width="38" height="42" viewBox="0 0 38 42" className="absolute left-[116px] top-[5px]" fill="none" stroke="#222" strokeWidth="1.4"><path d="M6 36H2V2h15l8 9v8M17 2v9h8" /><path d="M12 38c5 1 7-2 8-6l12-14 3 3-12 14c-3 3-7 4-11 3z" fill="#f3f2f1" /></svg>
        <svg width="26" height="13" viewBox="0 0 26 13" className="absolute left-[24px] bottom-[-1px]"><path d="M0 13 13 1l13 12" fill="#f3f2f1" stroke="#a8a6a4" strokeWidth="1" /></svg>
      </div>
      <div className="grid grid-cols-[repeat(6,42px)] auto-rows-[41.8px] pl-[9px] pt-[12px]">
        {VIZ.map((v, i) => <VizCell key={i}>{v}</VizCell>)}
      </div>
      <div className="pl-[19px] mt-[15px] h-[24px]">
        <svg width="24" height="6" viewBox="0 0 24 6" fill="#333"><circle cx="3" cy="3" r="1.5" /><circle cx="12" cy="3" r="1.5" /><circle cx="21" cy="3" r="1.5" /></svg>
      </div>
      <div className="absolute left-0 right-0 top-[505px] border-t border-[#dddbd9]" />
      <div className="absolute left-[261px] top-[509px] w-[8px] h-[171px] rounded-full bg-[#d0d0d0]" />
      <div className="absolute left-0 top-[505px] w-full text-[16.7px] text-[#444]">
        <div className="pl-[18px] pt-[16px] leading-[20px]">Values</div>
        <div className="mt-[8px] ml-[7px] w-[254px] h-[42px] bg-[#fff] border border-dashed border-[#bdbdbd] flex items-center pl-[15px] text-[#333]">Add data fields here</div>
        <div className="pl-[18px] mt-[19px] font-semibold leading-[20px]">Drill through</div>
        <div className="pl-[18px] mt-[16px] flex items-center h-[24px] pr-[32px] justify-between">
          Cross-report
          <div className="w-[48px] h-[24px] rounded-full border border-[#777] bg-[#fff] flex items-center pl-[6px] gap-[3px] text-[13px] text-[#777]">
            <span className="w-[12px] h-[12px] rounded-full bg-[#605e5c]" />Off
          </div>
        </div>
        <div className="pl-[18px] mt-[15px] flex items-center h-[24px] pr-[32px] justify-between">
          Keep all filters
          <div className="w-[48px] h-[24px] rounded-full bg-[#117865] flex items-center pl-[6px] gap-[3px] text-[13px] text-[#fff]">
            On<span className="w-[12px] h-[12px] rounded-full bg-[#fff]" />
          </div>
        </div>
      </div>
    </div>
  );
}

const FIELDS = ["Census", "Fertilization consumpt...", "GDP", "ICRISAT-District Level ...", "Infrastructure", "Irrigation source", "Monthly_Rainfall_Fro..."];

function DataPane() {
  return (
    <div className={`flex-1 bg-[#f3f2f1] ${UI}`}>
      <div className="h-[60px] flex items-center justify-between pl-[14px] pr-[11px]">
        <span className="text-[21.7px] font-semibold text-[#252423]">Data</span>
        <svg width="20" height="20" viewBox="0 0 20 20" fill="none" stroke="#222" strokeWidth="1.6"><path d="M2 2l8 8-8 8M10 2l8 8-8 8" /></svg>
      </div>
      <div className="ml-[7px] mt-[8px] w-[258px] h-[39px] border border-[#8a8886] rounded-[2px] flex items-center pl-[12px] gap-[8px] text-[18.5px] text-[#555]">
        <svg width="22" height="22" viewBox="0 0 22 22" fill="none" stroke="#555" strokeWidth="1.3"><circle cx="13" cy="8" r="6.5" /><path d="M8 13 1 21" /></svg>
        <span className="mt-[1px]">Search</span>
      </div>
      <div className="mt-[14.5px] flex flex-col">
        {FIELDS.map((f) => (
          <div key={f} className="h-[36.1px] flex items-center pl-[24px] text-[16.7px] text-[#555] whitespace-nowrap">
            <svg width="10" height="18" viewBox="0 0 10 18" fill="none" stroke="#444" strokeWidth="1.2"><path d="M1 1l8 8-8 8" /></svg>
            <span className="ml-[10px]"><TableGlyph /></span>
            <span className="ml-[8px]">{f}</span>
          </div>
        ))}
      </div>
    </div>
  );
}

function StatusBar() {
  return (
    <div className={`h-[35px] shrink-0 bg-[#f3f2f1] border-t border-[#e3e1df] flex items-center pl-[6px] pt-[1px] text-[16px] text-[#555] relative ${UI}`}>
      Page 5 of 10
      <div className="ml-auto flex items-center pr-[27px]">
        <span className="text-[#444] font-bold mr-[8px]">-</span>
        <div className="w-[149px] h-[1px] bg-[#777] relative mr-[10px]">
          <div className="absolute left-[39px] top-[-9px] w-[6px] h-[18px] bg-[#5f5f5f]" />
          <div className="absolute left-[74px] top-[-4px] w-[1px] h-[8px] bg-[#555]" />
        </div>
        <span className="text-[#444] text-[20px] font-semibold mr-[20px]">+</span>
        <span className="mr-[32px]">62%</span>
        <svg width="24" height="20" viewBox="0 0 24 20" fill="none" stroke="#666" strokeWidth="1.4"><rect x=".7" y=".7" width="22.6" height="18.6" /><path d="M5 7V4h3M16 4h3v3M19 13v3h-3M8 16H5v-3" /></svg>
      </div>
    </div>
  );
}

const Dot1 = ({ col = "#6e7378" }: { col?: string }) => <span className="absolute left-1/2 -translate-x-1/2 top-[55px] w-[8px] h-[6px] rounded-full" style={{ backgroundColor: col }} />;

function Slot({ w, dot, children, badge, className }: { w: string; dot?: boolean; children: ReactNode; badge?: ReactNode; className?: string }) {
  return (
    <div className={`${w} shrink-0 h-full relative flex items-center justify-center pb-[5px] ${className ?? ""}`}>
      {children}
      {badge}
      {dot && <Dot1 />}
    </div>
  );
}

const Badge = ({ t, col = "#0f6fc6", pos }: { t: string; col?: string; pos: string }) => (
  <span className={`absolute ${pos} top-[8px] w-[25px] h-[25px] rounded-full flex items-center justify-center text-[14px] text-[#fff]`} style={{ backgroundColor: col }}>{t}</span>
);

const Chrome = () => (
  <svg width="36" height="36" viewBox="0 0 36 36">
    <path d="M18 2a16 16 0 0 1 14 8H18a8 8 0 0 0-7 4L5 7a16 16 0 0 1 13-5z" fill="#e04a3a" />
    <path d="M5 7l7 12a8 8 0 0 0 6 7l-4 9A16 16 0 0 1 5 7z" fill="#2e9d4e" />
    <path d="M32 10a16 16 0 0 1-18 25l7-11a8 8 0 0 0 3-14z" fill="#f6c430" />
    <circle cx="18" cy="18" r="7" fill="#3b82e6" stroke="#fff" strokeWidth="1.5" />
  </svg>
);

function Taskbar() {
  return (
    <div className={`flex-1 bg-[linear-gradient(90deg,#e0e4e3_0%,#cfe5ea_25%,#d9e6e8_45%,#e2dfe0_58%,#d0e7ec_72%,#cde7ea_100%)] flex items-stretch ${UI}`}>
      <Slot w="w-[96px]">
        <svg width="36" height="34" viewBox="0 0 36 34"><rect width="36" height="34" rx="2" fill="#0f6cbd" /><rect x="3" y="3" width="14" height="28" rx="1" fill="#f7f7f7" /><rect x="20" y="3" width="13" height="20" fill="#6fc1ef" /><rect x="20" y="23" width="13" height="8" fill="#1f8fdc" /></svg>
      </Slot>
      <div className="w-[130px] shrink-0" />
      <Slot w="w-[62px]">
        <svg width="36" height="36" viewBox="0 0 36 36"><rect width="17" height="17" fill="#2aa3e8" /><rect x="19" width="17" height="17" fill="#39b5ef" /><rect y="19" width="17" height="17" fill="#1f8fdc" /><rect x="19" y="19" width="17" height="17" fill="#2aa3e8" /></svg>
      </Slot>
      <Slot w="w-[74px]">
        <svg width="36" height="38" viewBox="0 0 36 38" fill="none" stroke="#222" strokeWidth="3.4"><circle cx="15" cy="15" r="12" /><path d="M23 25l10 11" /></svg>
      </Slot>
      <Slot w="w-[52px]">
        <svg width="34" height="36" viewBox="0 0 34 36"><rect x="12" y="0" width="22" height="22" rx="2" fill="#f1f1f1" /><rect x="0" y="10" width="26" height="26" rx="2" fill="#2a2a2a" /><rect x="8" y="8" width="16" height="18" fill="#c9c9c9" /></svg>
      </Slot>
      <Slot w="w-[84px]" dot>
        <svg width="36" height="40" viewBox="0 0 36 40"><path d="M18 1c10 0 17 7 17 16 0 5-4 8-9 8s-8-2-8-5c0-2 2-3 2-6 0-4-4-7-8-7C6 7 2 11 1 15 2 7 9 1 18 1z" fill="#36c3a8" /><path d="M1 15c3-5 7-7 10-7s7 3 7 6c-5 0-9 4-9 10 0 7 6 13 14 14-2 1-4 1-6 1C7 39 0 29 1 15z" fill="#0c6fc0" /><path d="M9 24c0-6 4-10 9-10 0 3-2 4-2 6 0 3 3 5 8 5s9-2 11-6c-1 9-8 16-13 16-8 0-13-5-13-11z" fill="#1d9fdc" /></svg>
      </Slot>
      <Slot w="w-[58px]" badge={<Badge t="1" pos="left-[30px]" />}>
        <svg width="36" height="36" viewBox="0 0 36 36"><circle cx="24" cy="10" r="6" fill="#7b83d0" /><rect x="16" y="12" width="20" height="22" rx="8" fill="#7b83d0" /><rect x="0" y="8" width="18" height="18" fill="#fff" /><text x="9" y="22" textAnchor="middle" fontSize="13" fontWeight="700" fill="#4b53bc" fontFamily="Roboto">T</text></svg>
      </Slot>
      <Slot w="w-[64px]"><Chrome /></Slot>
      <Slot w="w-[70px]" dot>
        <svg width="38" height="36" viewBox="0 0 38 36"><path d="M2 2h14l4 5h16v27H2z" fill="#c69a1e" /><rect x="2" y="9" width="36" height="26" fill="#ffd65a" /><rect x="13" y="22" width="14" height="8" rx="1" fill="#1a86d0" /></svg>
      </Slot>
      <Slot w="w-[70px]" badge={<Badge t="" col="#ffc20e" pos="left-[32px]" />}>
        <svg width="36" height="38" viewBox="0 0 36 38"><circle cx="18" cy="20" r="17" fill="#1a95d2" /><text x="18" y="31" textAnchor="middle" fontSize="28" fontWeight="700" fill="#fff" fontFamily="Roboto">?</text></svg>
      </Slot>
      <Slot w="w-[52px]">
        <svg width="36" height="38" viewBox="0 0 36 38"><path d="M10 6V3c0-1 1-2 2-2h12c1 0 2 1 2 2v3" fill="none" stroke="#3aa6dd" strokeWidth="2" /><rect y="6" width="36" height="32" rx="4" fill="#14395f" /><rect x="10" y="13" width="7" height="7" fill="#f25022" /><rect x="19" y="13" width="7" height="7" fill="#7fba00" /><rect x="10" y="22" width="7" height="7" fill="#00a4ef" /><rect x="19" y="22" width="7" height="7" fill="#ffb900" /></svg>
      </Slot>
      <Slot w="w-[80px]" dot>
        <svg width="38" height="40" viewBox="0 0 38 40"><path d="M28 1 38 6v28l-10 5L10 22l-6 5-4-3 8-4-8-4 4-3 6 5z" fill="#1583cc" /><path d="M28 10 17 20l11 10z" fill="#d0e5ea" /></svg>
      </Slot>
      <Slot w="w-[52px]" dot badge={<Badge t="A" col="#d9681e" pos="left-[27px]" />}><Chrome /></Slot>
      <Slot w="w-[80px]" dot>
        <svg width="38" height="38" viewBox="0 0 38 38"><circle cx="21" cy="19" r="17" fill="#f2704f" /><path d="M21 2a17 17 0 0 1 17 17H21z" fill="#ffa78d" /><rect x="2" y="9" width="20" height="20" rx="2" fill="#c43e1c" /><text x="12" y="24" textAnchor="middle" fontSize="15" fontWeight="700" fill="#fff" fontFamily="Roboto">P</text></svg>
      </Slot>
      <Slot w="w-[52px]" dot>
        <svg width="34" height="40" viewBox="0 0 34 40"><rect width="34" height="40" fill="#eef3f4" /><path d="M17 6v14M11 13h12M8 10v6M5 13h6M26 10v6M23 13h6M8 25v6M5 28h6M26 25v6M23 28h6M17 21v14M12 28h10" stroke="#4a7ba8" strokeWidth="1.6" /></svg>
      </Slot>
      <Slot w="w-[80px]" dot badge={<Badge t="11" pos="left-[39px]" />}>
        <svg width="38" height="38" viewBox="0 0 38 38" fill="none"><path d="M4 35l3-9A16 16 0 1 1 13 32z" stroke="#2d9b55" strokeWidth="3" /><path d="M13 12c-2 2-1 6 3 10s8 5 10 3l-4-4-2 1c-2-1-3-3-4-4l1-2z" fill="#2d9b55" /></svg>
      </Slot>
      {/* active power bi tile */}
      <div className="w-[54px] shrink-0 h-full flex items-center justify-center">
        <div className="w-[56px] h-[58px] shrink-0 rounded-md bg-[#e9f0f4] shadow-[0_1px_2px_rgba(0,0,0,0.2)] relative flex items-start justify-center pt-[10px]">
          <svg width="36" height="36" viewBox="0 0 36 36"><rect width="36" height="36" fill="#0d77cc" /><rect x="20" y="0" width="13" height="36" fill="#c88e15" /><rect x="12" y="10" width="13" height="26" fill="#e8b82a" /><rect x="4" y="20" width="12" height="16" fill="#f7dc6e" /></svg>
          <span className="absolute bottom-[1px] left-[17px] w-[24px] h-[5px] rounded-full bg-[#0f6fc6]" />
        </div>
      </div>
      <div className="w-[60px] ml-[9px] shrink-0 h-full flex items-center justify-center">
        <div className="w-[60px] h-[60px] rounded-md bg-[#fde6e8] relative flex items-start justify-center pt-[14px]">
          <svg width="30" height="34" viewBox="0 0 30 34"><path d="M2 2l16 3v22H2z" fill="#f5d77c" /><path d="M12 24a6 6 0 0 1 4-7c2-4 8-4 10 0 3 0 4 3 4 5a4 4 0 0 1-4 4H14c-1 0-2-1-2-2z" fill="#1d8fe0" /></svg>
          <span className="absolute bottom-[1px] left-[26px] w-[9px] h-[5px] rounded-full bg-[#b3261e]" />
        </div>
      </div>
      <div className="w-[84px] shrink-0" />
      <Slot w="w-[60px]"><svg width="16" height="10" viewBox="0 0 16 10" fill="none" stroke="#222" strokeWidth="1.6"><path d="M1 9l7-7 7 7" /></svg></Slot>
      <Slot w="w-[36px]"><svg width="26" height="20" viewBox="0 0 26 20"><path d="M6 18a5 5 0 0 1 0-9c1-5 9-7 12-2 5 0 7 4 6 7s-3 4-5 4z" fill="#cfcfcf" stroke="#222" strokeWidth="1.5" /></svg></Slot>
      <Slot w="w-[62px]"><svg width="26" height="32" viewBox="0 0 26 32" fill="none" stroke="#555" strokeWidth="1.6"><path d="M3 14C3 8 9 3 15 3h5M17 0l4 3-4 4M3 18c0 6 4 10 8 10M7 24l-2 5 5 1" /><circle cx="19" cy="21" r="6.5" fill="#f39c12" stroke="none" /></svg></Slot>
      <div className="w-[50px] shrink-0 flex flex-col items-center justify-center pb-[2px] text-[16px] leading-[26px] text-[#222]"><span>ENG</span><span>IN</span></div>
      <Slot w="w-[44px]" className="ml-[10px]"><svg width="24" height="22" viewBox="0 0 24 22" fill="none" stroke="#222" strokeWidth="1.7"><path d="M1 7a16 16 0 0 1 22 0M5 11a10 10 0 0 1 14 0M8.500 15a5 5 0 0 1 7 0" /><circle cx="12" cy="19" r="1.6" fill="#222" /></svg></Slot>
      <Slot w="w-[26px]"><svg width="24" height="22" viewBox="0 0 24 22" fill="none" stroke="#222" strokeWidth="1.4"><path d="M1 8h4l6-6v18l-6-6H1zM15 8l7 7M22 8l-7 7" /></svg></Slot>
      <Slot w="w-[54px]"><svg width="26" height="24" viewBox="0 0 26 24" fill="none" stroke="#222" strokeWidth="1.5"><rect x="1" y="6" width="21" height="15" rx="2" /><path d="M24 11v5" /><rect x="4" y="9" width="15" height="9" fill="#222" stroke="none" /><path d="M8 0 6 7h4l-2 7" stroke="#222" /></svg></Slot>
      <div className="w-[99px] shrink-0 flex flex-col items-end justify-center pb-[2px] text-[16px] leading-[26px] text-[#222] pr-[9px]"><span>7:05 PM</span><span>4/25/2024</span></div>
      <Slot w="w-[32px]"><svg width="24" height="34" viewBox="0 0 24 34"><path d="M4 26c2-2 2-14 8-15s6 13 8 15z" fill="#222" /><path d="M10 30h4v2h-4z" fill="#222" /><text x="7" y="21" fontSize="9" fill="#fff" fontFamily="Roboto">z</text><text x="15" y="9" fontSize="9" fill="#222" fontFamily="Roboto">z</text></svg></Slot>
      <Slot w="w-[70px]" className="ml-[4px]">
        <svg width="38" height="38" viewBox="0 0 38 38"><path d="M14 2h8c6 0 9 6 10 14s0 14-4 14H10C5 30 4 22 6 14s4-12 8-12z" fill="#41a8e8" /><path d="M20 2c6 0 9 6 10 14l-8 0z" fill="#3ecfb4" /><path d="M20 16h10l2 10c-2 4-10 4-14 0z" fill="#c45bd4" /><path d="M6 20l10-4-2 14H8z" fill="#7dc24a" /><rect x="9" y="24" width="26" height="14" rx="2" fill="#ffc20e" /><text x="22" y="35" textAnchor="middle" fontSize="10" fontWeight="700" fill="#222" fontFamily="Roboto">PRE</text></svg>
      </Slot>
    </div>
  );
}

export default function App() {
  return (
    <div className="w-[1920px] h-[1080px] flex flex-col overflow-hidden bg-[#fff]">
      <TitleBar />
      <Ribbon />
      <div className="h-[732px] shrink-0 flex">
        <Sidebar />
        <div className="w-[1318px] shrink-0 flex flex-col">
          <div className="flex-1 flex min-h-0">
            <Canvas />
            <Filters />
          </div>
          <Tabs />
        </div>
        <VizPane />
        <DataPane />
      </div>
      <StatusBar />
      <div className="h-[2px] shrink-0 bg-[#111]" />
      <Taskbar />
    </div>
  );
}
